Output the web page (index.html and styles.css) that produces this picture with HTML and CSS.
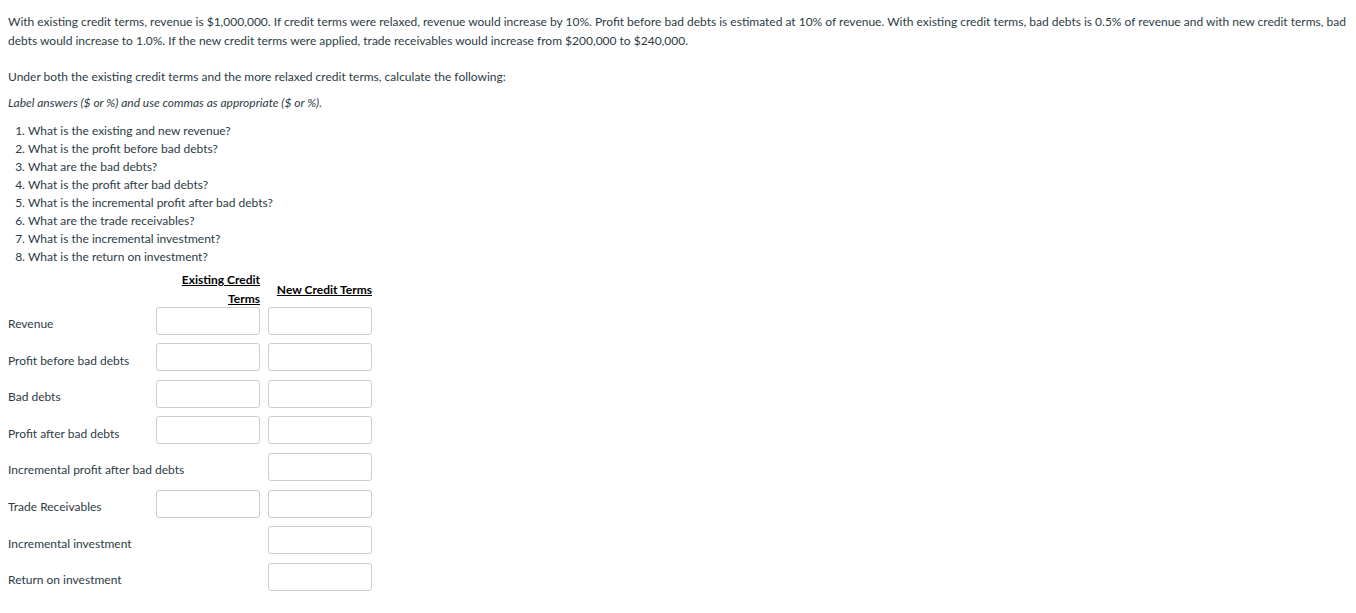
FILE: index.html
```html
<!DOCTYPE html>
<html lang="en">

<head>
    <meta charset="UTF-8">
    <meta name="viewport" content="width=device-width, initial-scale=1.0">
    <title>Credit Terms Question</title>
    <link rel="stylesheet" href="styles.css">
</head>

<body>
    <div class="question">
        <p class="intro">With existing credit terms, revenue is $1,000,000. If credit terms were relaxed, revenue would increase by 10%. Profit before bad debts is estimated at 10% of revenue. With existing credit terms, bad debts is 0.5% of revenue and with new credit terms, bad debts would increase to 1.0%. If the new credit terms were applied, trade receivables would increase from $200,000 to $240,000.</p>

        <p class="task">Under both the existing credit terms and the more relaxed credit terms, calculate the following:</p>
        <p class="hint">Label answers ($ or %) and use commas as appropriate ($ or %).</p>

        <ol class="steps">
            <li>What is the existing and new revenue?</li>
            <li>What is the profit before bad debts?</li>
            <li>What are the bad debts?</li>
            <li>What is the profit after bad debts?</li>
            <li>What is the incremental profit after bad debts?</li>
            <li>What are the trade receivables?</li>
            <li>What is the incremental investment?</li>
            <li>What is the return on investment?</li>
        </ol>

        <!-- Tabla de respuestas -->
        <div class="answers">
            <div class="head-cell"></div>
            <div class="head-cell"><span>Existing Credit Terms</span></div>
            <div class="head-cell"><span>New Credit Terms</span></div>

            <div class="label">Revenue</div>
            <input class="answer" type="text">
            <input class="answer" type="text">

            <div class="label">Profit before bad debts</div>
            <input class="answer" type="text">
            <input class="answer" type="text">

            <div class="label">Bad debts</div>
            <input class="answer" type="text">
            <input class="answer" type="text">

            <div class="label">Profit after bad debts</div>
            <input class="answer" type="text">
            <input class="answer" type="text">

            <div class="label wide">Incremental profit after bad debts</div>
            <input class="answer" type="text">

            <div class="label">Trade Receivables</div>
            <input class="answer" type="text">
            <input class="answer" type="text">

            <div class="label wide">Incremental investment</div>
            <input class="answer" type="text">

            <div class="label wide">Return on investment</div>
            <input class="answer" type="text">
        </div>
    </div>
</body>

</html>
```

FILE: styles.css
```css
body {
    font-family: 'Lato', 'Open Sans', sans-serif;
    font-size: 12px;
    line-height: 19px;
    color: #2d3b45;
    margin: 0;
    padding: 12px 8px 0;
    background: #fff;
}

p {
    margin: 0;
}

.intro {
    margin-bottom: 17px;
}

.task {
    margin-bottom: 7px;
}

.hint {
    font-style: italic;
    margin-bottom: 10px;
}

.steps {
    margin: 0 0 4px;
    padding-left: 20px;
    line-height: 18px;
}

/* Estilos para la tabla de respuestas */
.answers {
    display: grid;
    grid-template-columns: 140px 104px 104px;
    grid-auto-rows: 28px;
    column-gap: 8px;
    row-gap: 8.6px;
}

.head-cell {
    height: 38px;
    display: flex;
    align-items: center;
    justify-content: flex-end;
    text-align: right;
    font-weight: bold;
    color: #000;
    margin-bottom: -1px;
}

.head-cell span {
    text-decoration: underline;
}

.label {
    display: flex;
    align-items: center;
    padding-top: 6px;
}

.label.wide {
    grid-column: 1 / span 2;
}

.answer {
    box-sizing: border-box;
    width: 104px;
    height: 28px;
    margin: 0;
    border: 1px solid #c7cdd1;
    border-radius: 3px;
    background: #fff;
    font-family: inherit;
    font-size: 12px;
    padding: 4px 6px;
}
```
